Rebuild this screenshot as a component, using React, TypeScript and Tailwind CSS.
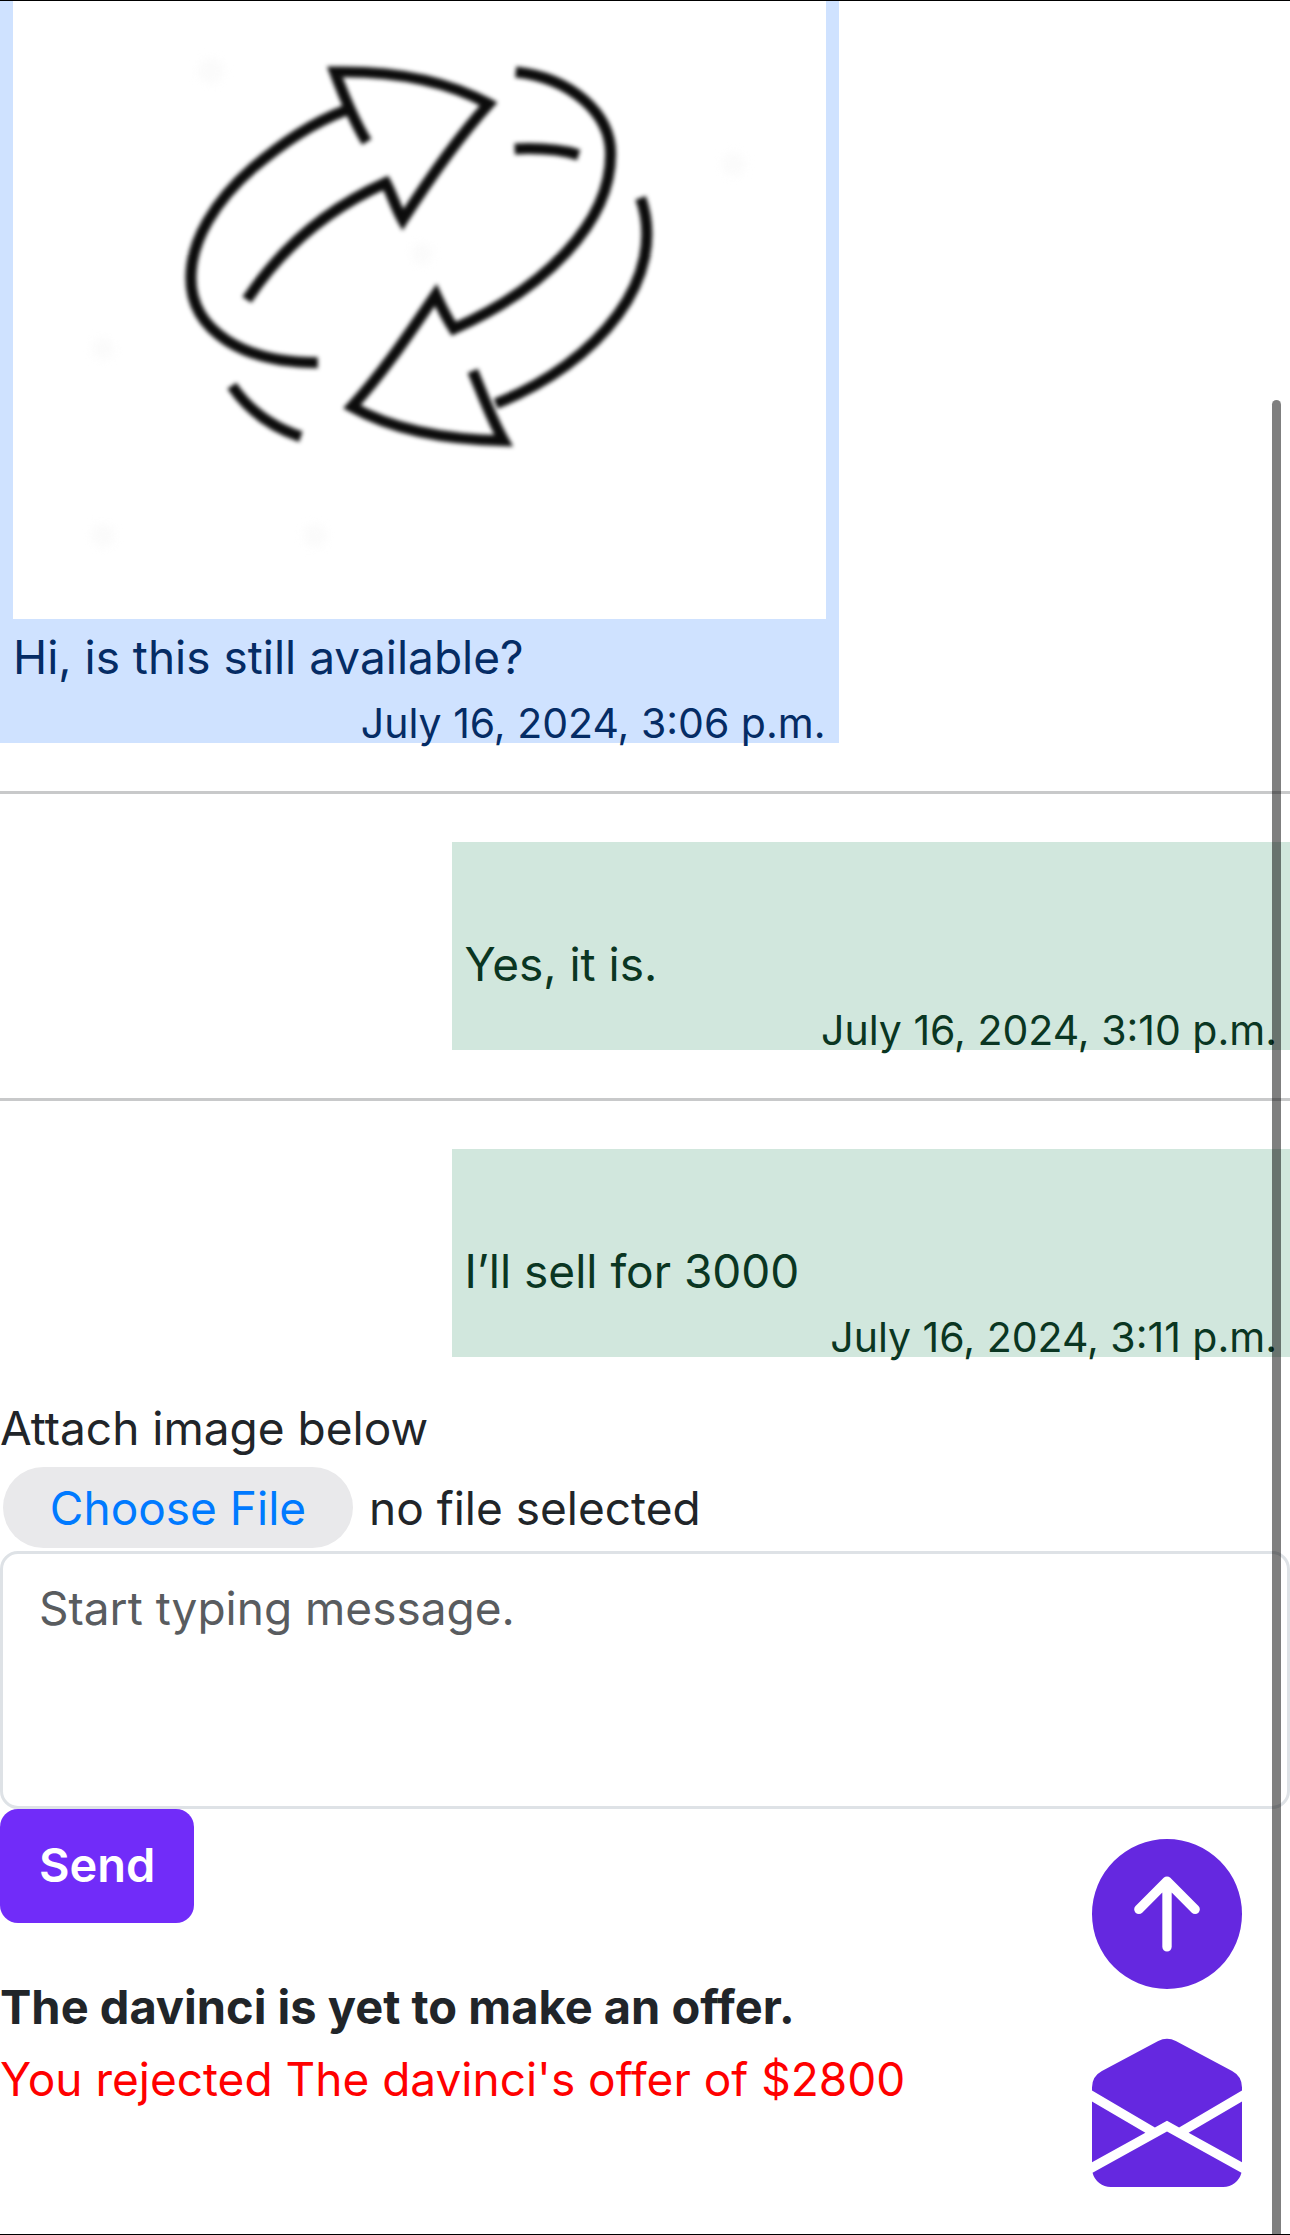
import React from "react";
import { BsArrowUpCircleFill, BsEnvelopeOpenFill } from "react-icons/bs";

function ArrowsSketch() {
  return (
    <svg
      viewBox="13 1 813 618"
      role="img"
      aria-label="Sketch of two circling arrows"
      className="block w-full bg-white"
    >
      <g fill="#fbfbfb" className="blur-[4px]">
        <circle cx="211" cy="71" r="13" />
        <circle cx="103" cy="349" r="11" />
        <circle cx="103" cy="536" r="12" />
        <circle cx="315" cy="536" r="12" />
        <circle cx="734" cy="164" r="12" />
        <circle cx="422" cy="254" r="11" />
      </g>
      <g
        fill="none"
        stroke="#0c0c0c"
        strokeWidth="11"
        strokeLinejoin="miter"
        className="blur-[2px]"
      >
        <path d="M367 142C353 119 344 96 335 72C390 71 445 80 489 104C457 139 430 178 403 220C396 208 392 194 386 183C334 206 284 244 247 300" />
        <path d="M347 110C312 123 283 143 253 168C215 201 191 241 191 278C191 332 245 363 318 363" />
        <path d="M232 386C249 411 271 427 301 437" />
        <path d="M516 72C572 78 611 114 611 154C611 223 545 289 454 329C446 317 441 306 436 295C408 336 384 372 352 407C393 430 448 440 504 441C491 418 483 395 473 371" />
        <path d="M641 198C669 277 600 363 496 404" />
        <path d="M515 149C538 148 560 149 579 155" />
      </g>
    </svg>
  );
}

type MessageProps = {
  text: string;
  date: string;
  mine?: boolean;
  children?: React.ReactNode;
};

function Message({ text, date, mine, children }: MessageProps) {
  return (
    <article
      className={
        mine
          ? "ml-auto w-[65%] bg-[#d1e7dd] px-[13px] text-[#0a3622]"
          : "w-[65%] bg-[#cfe2ff] px-[13px] text-[#052c65]"
      }
    >
      {children ?? <div className="h-[86px]" />}
      <p className="leading-[72px]">{text}</p>
      <p className="h-[50px] text-right text-[41px] leading-[60px]">{date}</p>
    </article>
  );
}

export default function App() {
  return (
    <div className="relative min-h-screen overflow-hidden border-y border-black bg-white font-['Inter',sans-serif] text-[46px] text-[#212529]">
      <main>
        <Message text="Hi, is this still available?" date="July 16, 2024, 3:06 p.m.">
          <div className="pb-[2px]">
            <ArrowsSketch />
          </div>
        </Message>
        <hr className="my-12 border-t-[3px] border-[#c8c9ca]" />
        <Message mine text="Yes, it is." date="July 16, 2024, 3:10 p.m." />
        <hr className="my-12 border-t-[3px] border-[#c8c9ca]" />
        <Message mine text="I’ll sell for 3000" date="July 16, 2024, 3:11 p.m." />

        <form className="mt-9" onSubmit={(e) => e.preventDefault()}>
          <p className="pb-1 leading-[70px]">Attach image below</p>
          <div className="flex items-center gap-4 px-[3px] pb-[3px]">
            <label
              htmlFor="attachment"
              className="flex h-[81px] w-[350px] items-center justify-center rounded-full bg-[#e9e9eb] pt-[3px] text-[#007aff]"
            >
              Choose File
            </label>
            <input id="attachment" type="file" className="sr-only" />
            <span className="pt-[3px]">no file selected</span>
          </div>
          <textarea
            aria-label="Message"
            placeholder="Start typing message."
            className="block h-[258px] w-full resize-none rounded-[18px] border-[3px] border-[#dee2e6] bg-white px-9 py-[18px] leading-[72px] placeholder:text-[#595c5f]"
          />
          <button
            type="submit"
            className="block h-[114px] rounded-[18px] bg-[#712cf9] px-[39px] text-[47px] font-semibold text-white"
          >
            Send
          </button>
        </form>

        <section className="mt-12 pb-[90px] leading-[72px]">
          <p className="text-[47px] font-bold">The davinci is yet to make an offer.</p>
          <p className="text-[#ff0000]">You rejected The davinci's offer of $2800</p>
        </section>
      </main>

      <nav className="fixed right-12 bottom-12 flex flex-col gap-12 text-[#6528e0]">
        <button type="button" aria-label="Back to top" className="rounded-full bg-white">
          <BsArrowUpCircleFill className="block size-[150px]" />
        </button>
        <a href="#messages" aria-label="Messages">
          <BsEnvelopeOpenFill className="block size-[150px]" />
        </a>
      </nav>

      <div className="absolute top-[399px] right-[9px] bottom-0 w-[9px] rounded-t-full bg-black/50" />
    </div>
  );
}
